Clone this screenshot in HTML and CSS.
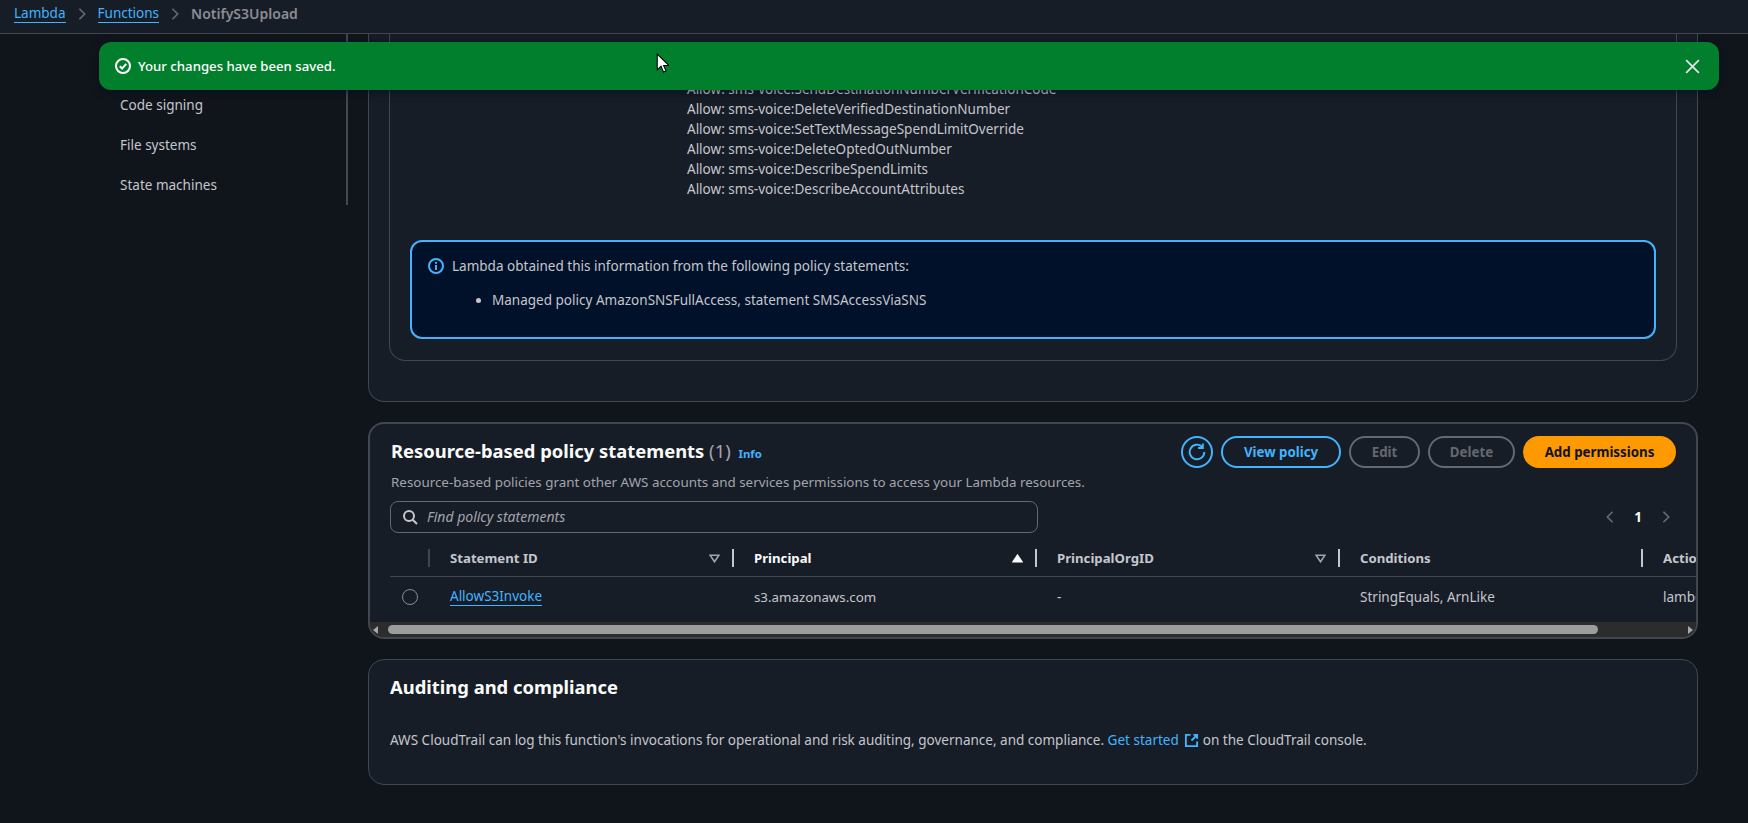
FILE: index.html
```html
<!DOCTYPE html>
<html lang="en">
<head>
<meta charset="utf-8">
<title>NotifyS3Upload - Lambda</title>
<link rel="stylesheet" href="styles.css">
</head>
<body>
<header class="crumbs">
  <a class="link" href="#">Lambda</a>
  <svg class="crumb-sep" viewBox="0 0 16 16"><path d="M5 2l6 6-6 6"/></svg>
  <a class="link" href="#">Functions</a>
  <svg class="crumb-sep" viewBox="0 0 16 16"><path d="M5 2l6 6-6 6"/></svg>
  <span class="crumb-current">NotifyS3Upload</span>
</header>

<div class="toast">
  <svg class="toast-icon" viewBox="0 0 16 16"><circle cx="8" cy="8" r="7"/><path d="M4.8 8.2l2.3 2.3 4.2-4.6"/></svg>
  <span class="toast-text">Your changes have been saved.</span>
  <svg class="toast-close" viewBox="0 0 16 16"><path d="M2 2l12 12M14 2L2 14"/></svg>
</div>

<svg class="cursor" viewBox="0 0 12 19"><path d="M1 1v15l3.6-3.4 2.3 5.4 2.4-1-2.3-5.2H12z"/></svg>

<div class="layout">
  <nav class="side">
    <ul class="side-list">
      <li>Code signing</li>
      <li>File systems</li>
      <li>State machines</li>
    </ul>
  </nav>
  <main class="content">
    <section class="card card-top">
      <div class="inner">
        <ul class="allow-list">
          <li>Allow: sms-voice:SendDestinationNumberVerificationCode</li>
          <li>Allow: sms-voice:DeleteVerifiedDestinationNumber</li>
          <li>Allow: sms-voice:SetTextMessageSpendLimitOverride</li>
          <li>Allow: sms-voice:DeleteOptedOutNumber</li>
          <li>Allow: sms-voice:DescribeSpendLimits</li>
          <li>Allow: sms-voice:DescribeAccountAttributes</li>
        </ul>
        <div class="info">
          <div class="info-head">
            <svg class="info-icon" viewBox="0 0 16 16"><circle cx="8" cy="8" r="7"/><path d="M8 7v5M8 4v1.8"/></svg>
            <span>Lambda obtained this information from the following policy statements:</span>
          </div>
          <ul class="info-list"><li>Managed policy AmazonSNSFullAccess, statement SMSAccessViaSNS</li></ul>
        </div>
      </div>
    </section>

    <section class="card card-table">
      <div class="table-head">
        <div class="title-block">
          <h2 class="title">Resource-based policy statements <span class="count">(1)</span> <a class="info-link" href="#">Info</a></h2>
          <p class="desc">Resource-based policies grant other AWS accounts and services permissions to access your Lambda resources.</p>
        </div>
        <div class="actions">
          <button class="btn btn-icon"><svg viewBox="0 0 16 16"><path d="M14.5 8a6.5 6.5 0 1 1-2-4.7"/><path d="M13.2 0.4v4.1H9"/></svg></button>
          <button class="btn btn-blue">View policy</button>
          <button class="btn btn-off btn-edit">Edit</button>
          <button class="btn btn-off btn-delete">Delete</button>
          <button class="btn btn-primary">Add permissions</button>
        </div>
      </div>
      <div class="filter-row">
        <div class="search">
          <svg viewBox="0 0 16 16"><circle cx="7" cy="7" r="5"/><path d="M10.7 10.7L15 15"/></svg>
          <span>Find policy statements</span>
        </div>
        <div class="pager">
          <svg viewBox="0 0 16 16"><path d="M11 2L5 8l6 6"/></svg>
          <span class="page-num">1</span>
          <svg viewBox="0 0 16 16"><path d="M5 2l6 6-6 6"/></svg>
        </div>
      </div>
      <div class="table-clip">
        <div class="row row-head">
          <div class="cell cell-radio"></div>
          <div class="cell">Statement ID<svg class="sort" viewBox="0 0 10 8"><path d="M1 1h8L5 7z"/></svg></div>
          <div class="cell cell-active">Principal<svg class="sort sort-on" viewBox="0 0 10 8"><path d="M1 7h8L5 1z"/></svg></div>
          <div class="cell">PrincipalOrgID<svg class="sort" viewBox="0 0 10 8"><path d="M1 1h8L5 7z"/></svg></div>
          <div class="cell">Conditions</div>
          <div class="cell cell-last">Action</div>
        </div>
        <div class="row row-body">
          <div class="cell cell-radio"><span class="radio"></span></div>
          <div class="cell"><a class="link" href="#">AllowS3Invoke</a></div>
          <div class="cell">s3.amazonaws.com</div>
          <div class="cell">-</div>
          <div class="cell">StringEquals, ArnLike</div>
          <div class="cell cell-last">lambda:InvokeFunction</div>
        </div>
      </div>
      <div class="scrollbar">
        <span class="arrow arrow-left"></span>
        <span class="thumb"></span>
        <span class="arrow arrow-right"></span>
      </div>
    </section>

    <section class="card card-audit">
      <h2 class="title">Auditing and compliance</h2>
      <p class="audit-text">AWS CloudTrail can log this function's invocations for operational and risk auditing, governance, and compliance. <a class="plain-link" href="#">Get started <svg viewBox="0 0 16 16"><path d="M7 2H2v12h12V9"/><path d="M10 2h4v4M14 2L8 8"/></svg></a> on the CloudTrail console.</p>
    </section>
  </main>
</div>
</body>
</html>
```

FILE: styles.css
```css
* { box-sizing: border-box; }
html, body { height: 100%; }
body {
  margin: 0;
  background: #10151c;
  color: #c6c6cd;
  font: 13.52px/20px "Noto Sans", "Open Sans", sans-serif;
  overflow: hidden;
  position: relative;
}
ul { margin: 0; padding: 0; list-style: none; }
svg { fill: none; stroke: currentColor; stroke-width: 2; flex: none; }
a { text-decoration: none; }
p, h2 { margin: 0; }

.link { color: #42b4ff; border-bottom: 1px solid #42b4ff; line-height: 18px; display: inline-block; }

.crumbs {
  height: 34px;
  background: #161d26;
  border-bottom: 1px solid #424650;
  padding: 0 14px 6px;
  display: flex;
  align-items: center;
  gap: 9px;
}
.crumb-sep { width: 14px; height: 14px; color: #656871; }
.crumb-current { color: #8c8c94; font-weight: 600; font-size: 14px; }

.toast {
  position: absolute;
  left: 99px;
  top: 42px;
  width: 1620px;
  height: 48px;
  background: #027f2c;
  border-radius: 12px;
  box-shadow: 0 2px 8px rgba(0, 7, 22, .5);
  padding: 0 18px 0 16px;
  display: flex;
  align-items: center;
  gap: 7px;
  color: #fff;
  font-weight: 500;
  font-size: 13.2px;
  z-index: 2;
}
.toast-icon { width: 16px; height: 16px; }
.toast-text { flex: 1; }
.toast-close { width: 17px; height: 17px; color: #e8e8e8; stroke-width: 1.6; }

.cursor { position: absolute; left: 656px; top: 53px; width: 13px; height: 20px; fill: #fff; stroke: #000; stroke-width: 1; z-index: 3; }

.layout { display: grid; grid-template-columns: 368px 1330px; }

.side { height: 171px; border-right: 2px solid #424650; width: 348px; padding: 61px 0 0 120px; }
.side-list li { height: 40px; color: #c6c6cd; }

.content { display: flex; flex-direction: column; }

.card { background: #161d26; border: 1px solid #424650; border-radius: 16px; }

.card-top {
  height: 368px;
  border-top: 0;
  border-radius: 0 0 16px 16px;
  padding: 0 20px 0 20px;
}
.inner {
  height: 327px;
  border: 1px solid #424650;
  border-top: 0;
  border-radius: 0 0 16px 16px;
  padding: 45px 20px 0 20px;
}
.allow-list { padding-left: 277px; }
.allow-list li { height: 20px; }
.info {
  margin-top: 41px;
  height: 99px;
  background: #001129;
  border: 2px solid #42b4ff;
  border-radius: 12px;
  padding: 14px 16px;
}
.info-head { display: flex; align-items: center; gap: 8px; }
.info-icon { width: 16px; height: 16px; color: #42b4ff; }
.info-list { margin-top: 14px; padding-left: 64px; }
.info-list li { display: list-item; list-style: disc; }

.card-table {
  margin-top: 20px;
  height: 217px;
  border-width: 2px;
  overflow: hidden;
  display: flex;
  flex-direction: column;
}
.table-head {
  display: flex;
  justify-content: space-between;
  padding: 12px 20px 0 21px;
  height: 77px;
}
.title { color: #fbfbfb; font-size: 18.4px; line-height: 24px; font-weight: 700; }
.title-block .title { margin-top: 3px; }
.count { color: #a4a4ad; font-weight: 400; }
.info-link { color: #42b4ff; font-size: 11.4px; font-weight: 700; margin-left: 3px; }
.desc { color: #a4a4ad; font-size: 13.4px; margin-top: 6px; white-space: nowrap; }

.actions { display: flex; gap: 8px; }
.btn {
  height: 32px;
  border-radius: 16px;
  border: 2px solid;
  background: none;
  font: 700 13.3px/20px "Noto Sans", "Open Sans", sans-serif;
  padding: 0;
}
.btn-icon { width: 32px; color: #42b4ff; display: flex; align-items: center; justify-content: center; }
.btn-icon svg { width: 18px; height: 18px; stroke-width: 1.7; }
.btn-blue { width: 120px; color: #42b4ff; border-color: #42b4ff; }
.btn-off { color: #656871; border-color: #656871; }
.btn-edit { width: 71px; }
.btn-delete { width: 87px; }
.btn-primary { width: 153px; background: #ff9900; border-color: #ff9900; color: #0f141a; }

.filter-row { display: flex; justify-content: space-between; align-items: center; padding: 0 23px 0 20px; height: 32px; }
.search {
  width: 648px;
  height: 32px;
  border: 1px solid #656871;
  border-radius: 8px;
  display: flex;
  align-items: center;
  gap: 9px;
  padding: 0 11px;
  color: #a4a4ad;
  font-style: italic;
  font-size: 14px;
}
.search svg { width: 16px; height: 16px; color: #c6c6cd; }
.pager { display: flex; align-items: center; gap: 17px; color: #656871; }
.pager svg { width: 14px; height: 14px; }
.page-num { color: #fbfbfb; font-weight: 700; }

.table-clip { flex: 1; overflow: hidden; margin-left: 20px; margin-top: 9px; }
.row { display: grid; grid-template-columns: 40px 304px 303px 303px 303px 200px; align-items: center; width: max-content; }
.row-head { height: 35px; border-bottom: 1px solid #424650; color: #c6c6cd; font-weight: 700; font-size: 13.2px; padding-bottom: 2px; }
.row-body { height: 39px; }
.row-body .cell:nth-child(3) { font-size: 13.3px; }
.cell { padding-left: 20px; white-space: nowrap; position: relative; display: flex; align-items: center; justify-content: space-between; }
.row-head .cell { height: 18px; border-right: 2px solid #c6c6cd; padding-right: 12px; }
.row-head .cell-last, .row-body .cell-last { border: 0; }
.row-head .cell-radio { border-right-color: #424650; padding: 0; }
.cell-active { color: #fbfbfb; }
.cell-radio { padding-left: 0; justify-content: flex-start; }
.radio { width: 16px; height: 16px; margin-left: 12px; border: 1px solid #8c8c94; border-radius: 50%; }
.sort { width: 11px; height: 9px; stroke-width: 1.4; color: #a4a4ad; }
.sort-on { fill: #fbfbfb; color: #fbfbfb; }

.scrollbar { height: 15px; background: #2c2c2c; display: flex; align-items: center; padding: 0 3px; gap: 4px; flex: none; }
.arrow { width: 0; height: 0; border: 4px solid transparent; }
.arrow-left { border-right: 5px solid #a8a8a8; border-left: 0; }
.arrow-right { border-left: 5px solid #a8a8a8; border-right: 0; margin-left: auto; }
.thumb { margin-left: 6px; width: 1210px; height: 9px; border-radius: 5px; background: #9c9c9c; }

.card-audit { margin-top: 20px; height: 126px; padding: 15px 21px; }
.audit-text { margin-top: 31px; white-space: nowrap; }
.plain-link { color: #42b4ff; }
.plain-link svg { width: 15px; height: 15px; vertical-align: -3px; margin-left: 2px; }
```
